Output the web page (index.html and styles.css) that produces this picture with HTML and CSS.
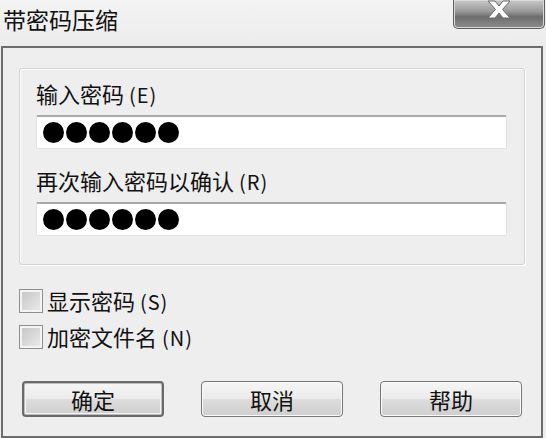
FILE: index.html
```html
<!DOCTYPE html>
<html lang="zh-CN">
<head>
  <meta charset="UTF-8" />
  <meta name="viewport" content="width=device-width, initial-scale=1.0"/>
  <title>带密码压缩</title>
  <link rel="stylesheet" href="styles.css">
</head>
<body>
  <div class="titlebar">
    <div class="title">带密码压缩</div>
    <button class="close" aria-label="关闭">
      <svg width="26" height="19" viewBox="0 0 26 19">
        <polygon points="2,1 9,1 13,6 17,1 24,1 16.5,9.5 24,18 17,18 13,13 9,18 2,18 9.5,9.5" fill="#fff" stroke="#6a6a6a" stroke-width="1"/>
      </svg>
    </button>
  </div>

  <div class="panel">
    <div class="group">
      <div class="label">输入密码 <span class="key">(E)</span></div>
      <div class="field">
        <span class="dot"></span><span class="dot"></span><span class="dot"></span>
        <span class="dot"></span><span class="dot"></span><span class="dot"></span>
      </div>
      <div class="label second">再次输入密码以确认 <span class="key">(R)</span></div>
      <div class="field">
        <span class="dot"></span><span class="dot"></span><span class="dot"></span>
        <span class="dot"></span><span class="dot"></span><span class="dot"></span>
      </div>
    </div>

    <div class="options">
      <label class="check"><span class="box"></span><span>显示密码 <span class="key">(S)</span></span></label>
      <label class="check"><span class="box"></span><span>加密文件名 <span class="key">(N)</span></span></label>
    </div>

    <div class="actions">
      <button class="btn default">确定</button>
      <button class="btn">取消</button>
      <button class="btn">帮助</button>
    </div>
  </div>
</body>
</html>
```

FILE: styles.css
```css
body {
  margin: 0;
  width: 546px;
  height: 438px;
  overflow: hidden;
  background: #eeeeee;
  color: #111;
  font-family: "Noto Sans CJK SC", "Noto Sans", sans-serif;
}

.titlebar {
  height: 46px;
  display: flex;
  justify-content: space-between;
  align-items: flex-start;
  background: linear-gradient(#f3f3f3, #ececec);
}

.title {
  font-size: 23px;
  line-height: 26px;
  padding: 6px 0 0 3px;
}

.close {
  width: 92px;
  height: 29px;
  margin-right: 1px;
  padding: 0;
  border: 1px solid #5e5e5e;
  border-top: none;
  border-radius: 0 0 5px 5px;
  background: linear-gradient(#c9c9c9 0%, #9a9a9a 40%, #6e6e6e 60%, #8c8c8c 100%);
  box-shadow: inset 0 0 0 1px #d8d8d8;
  display: flex;
  justify-content: center;
  align-items: flex-start;
}

.panel {
  margin-left: 1px;
  width: 522px;
  height: 368px;
  border: 2px solid #6c6c6c;
  padding: 20px 0 0 16px;
}

.group {
  width: 471px;
  border: 1px solid #d4d4d4;
  border-radius: 3px;
  box-shadow: inset 1px 1px 0 #fff, 1px 1px 0 #fff;
  padding: 11px 17px 28px 16px;
}

.label {
  font-size: 22px;
  line-height: 26px;
  height: 26px;
  margin-bottom: 9px;
  white-space: nowrap;
}

.label.second {
  margin-top: 18px;
}

.key {
  font-size: 20px;
  line-height: 1;
  letter-spacing: 1px;
}

.field {
  height: 31px;
  background: #fff;
  border: 1px solid #e2e2e2;
  border-top: 2px solid #a8a8a8;
  border-radius: 2px;
  display: flex;
  align-items: center;
  gap: 2px;
  padding-left: 6px;
}

.dot {
  width: 21px;
  height: 21px;
  border-radius: 50%;
  background: #000;
}

.options {
  margin-top: 23px;
  display: flex;
  flex-direction: column;
  gap: 11px;
}

.check {
  display: flex;
  align-items: center;
  gap: 4px;
  font-size: 22px;
  line-height: 25px;
  height: 25px;
  white-space: nowrap;
}

.box {
  width: 22px;
  height: 22px;
  border: 1px solid #8e8e8e;
  background: linear-gradient(135deg, #c4c4c4, #ececec);
  box-shadow: inset 0 0 0 2px #f4f4f4;
}

.actions {
  margin-top: 32px;
  margin-left: 3px;
  display: flex;
  gap: 37px;
}

.btn {
  width: 142px;
  height: 36px;
  font-family: inherit;
  font-size: 22px;
  color: #111;
  border: 1px solid #767676;
  border-radius: 4px;
  background: linear-gradient(#f6f6f6 0%, #ebebeb 48%, #dcdcdc 52%, #cfcfcf 100%);
  box-shadow: inset 0 0 0 1px #fbfbfb;
  padding: 0;
}

.btn.default {
  border: 2px solid #6a6a6a;
  box-shadow: inset 0 0 0 1px #bdbdbd, inset 0 0 0 2px #f4f4f4;
}
```
